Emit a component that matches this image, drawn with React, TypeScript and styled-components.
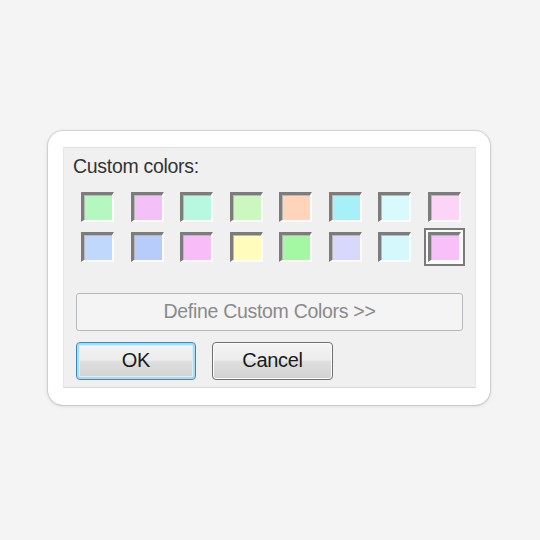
import styled, { createGlobalStyle } from "styled-components";

const GlobalStyle = createGlobalStyle`
  html, body {
    margin: 0;
    padding: 0;
    background: #f4f4f4;
  }
`;

const Page = styled.div`
  width: 540px;
  height: 540px;
  box-sizing: border-box;
  padding: 131px 0 0 48px;
  font-family: "Liberation Sans", Arial, sans-serif;
`;

const Sticker = styled.div`
  width: 442px;
  height: 274px;
  box-sizing: border-box;
  background: #ffffff;
  border-radius: 15px;
  box-shadow: 0 0 1px 1px rgba(0, 0, 0, 0.12), 0 1px 4px rgba(0, 0, 0, 0.12);
  padding: 16px 14px 17px 15px;
`;

const Dialog = styled.div`
  height: 100%;
  box-sizing: border-box;
  background: #f0f0f0;
  border-top: 1px solid #dedede;
  border-left: 1px solid #e6e6e6;
  border-bottom: 1px solid #d8d8d8;
  border-right: 1px solid #e8e8e8;
  padding: 6px 12px 0 12px;
  display: flex;
  flex-direction: column;
`;

const Label = styled.div`
  font-size: 19.5px;
  color: #333;
  line-height: 24px;
  margin-left: -3px;
  letter-spacing: -0.3px;
`;

const Grid = styled.div`
  display: grid;
  grid-template-columns: repeat(8, 33px);
  grid-auto-rows: 30px;
  column-gap: 16.5px;
  row-gap: 10px;
  margin: 14px 0 0 5px;
`;

const Swatch = styled.div<{ $color: string; $selected?: boolean }>`
  box-sizing: border-box;
  background: ${(p) => p.$color};
  border-top: 3px solid #7c7c7c;
  border-left: 3px solid #7c7c7c;
  border-right: 2px solid #fbfbfb;
  border-bottom: 2px solid #fbfbfb;
  box-shadow: inset 1px 1px 0 #b8b8b8
    ${(p) => (p.$selected ? ", 0 0 0 2px #fafafa, 0 0 0 4px #7a7a7a" : "")};
`;

const DefineButton = styled.button`
  margin-top: 31px;
  height: 38px;
  width: 387px;
  box-sizing: border-box;
  border: 1px solid #b5b9bc;
  border-radius: 3px;
  background: #f4f4f4;
  color: #8a8a8a;
  font-family: inherit;
  font-size: 19.5px;
  letter-spacing: -0.3px;
  padding: 0 0 2px 0;
`;

const ButtonRow = styled.div`
  display: flex;
  gap: 16px;
  margin-top: 11px;
`;

const PushButton = styled.button<{ $default?: boolean }>`
  height: 38px;
  width: ${(p) => (p.$default ? "120px" : "121px")};
  box-sizing: border-box;
  border-radius: 4px;
  font-family: inherit;
  font-size: 20px;
  color: #1a1a1a;
  padding: 0 0 2px 0;
  letter-spacing: -0.3px;
  border: 1px solid ${(p) => (p.$default ? "#3d89b8" : "#707070")};
  background: linear-gradient(
    to bottom,
    #f4f4f4 0%,
    #ececec 48%,
    #dedede 52%,
    #d2d2d2 100%
  );
  box-shadow: ${(p) =>
    p.$default
      ? "inset 0 0 0 2px #a7dcf2, inset 0 0 0 3px #d8f0fa"
      : "inset 0 0 0 1px #fcfcfc"};
`;

const rows = [
  ["#b4f8c0", "#f4c0f8", "#b8f8e0", "#ccf8c0", "#ffd4b8", "#a8f0f8", "#d8fafc", "#fcd4f8"],
  ["#c0d8fc", "#b8ccfc", "#f8bcf8", "#fffcbc", "#a4f8a4", "#d8d8fc", "#d4f8fc", "#f8c0f8"],
];

export default function App() {
  return (
    <>
      <GlobalStyle />
      <Page>
        <Sticker>
          <Dialog>
            <Label>Custom colors:</Label>
            <Grid>
              {rows.flat().map((c, i) => (
                <Swatch key={i} $color={c} $selected={i === 15} />
              ))}
            </Grid>
            <DefineButton disabled>Define Custom Colors &gt;&gt;</DefineButton>
            <ButtonRow>
              <PushButton $default>OK</PushButton>
              <PushButton>Cancel</PushButton>
            </ButtonRow>
          </Dialog>
        </Sticker>
      </Page>
    </>
  );
}
